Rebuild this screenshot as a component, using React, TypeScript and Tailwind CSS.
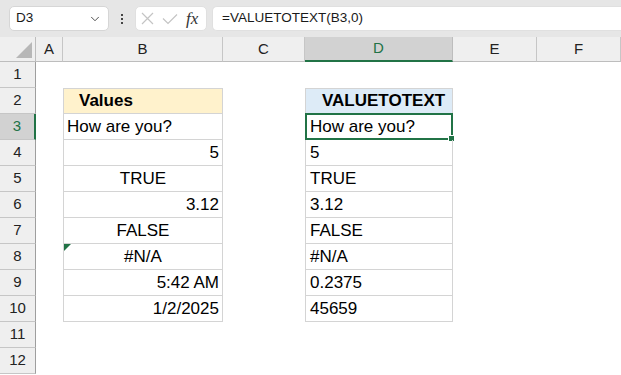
import { ChevronDown } from 'lucide-react';

/* Excel-like sheet: VALUETOTEXT example */

type Align = 'left' | 'center' | 'right';

const colWidths = 'grid-cols-[36px_27px_160px_82px_148px_84px_84px]';
const columns = ['A', 'B', 'C', 'D', 'E', 'F'];

const values: { text: string; align: Align }[] = [
  { text: 'How are you?', align: 'left' },
  { text: '5', align: 'right' },
  { text: 'TRUE', align: 'center' },
  { text: '3.12', align: 'right' },
  { text: 'FALSE', align: 'center' },
  { text: '#N/A', align: 'center' },
  { text: '5:42 AM', align: 'right' },
  { text: '1/2/2025', align: 'right' },
];

const results = ['How are you?', '5', 'TRUE', '3.12', 'FALSE', '#N/A', '0.2375', '45659'];

const alignClass: Record<Align, string> = {
  left: 'justify-start',
  center: 'justify-center',
  right: 'justify-end',
};

function Toolbar() {
  return (
    <div className="h-[37px] bg-[#e6e6e6] flex items-center pl-[9px] gap-[5px] font-['Liberation_Sans',sans-serif] text-[13.5px] text-[#1a1a1a]">
      {/* Name box */}
      <div className="w-[100px] h-[25px] bg-white rounded-[5px] border border-[#d6d6d6] flex items-center pl-[6px] pr-[6px] justify-between">
        <span>D3</span>
        <ChevronDown className="w-[14px] h-[14px] text-[#444]" strokeWidth={1.6} />
      </div>

      {/* Dots */}
      <div className="w-[16px] flex flex-col items-center gap-[2px]">
        <span className="w-[2px] h-[2px] bg-[#444]" />
        <span className="w-[2px] h-[2px] bg-[#444]" />
        <span className="w-[2px] h-[2px] bg-[#444]" />
      </div>

      {/* Cancel / enter / fx */}
      <div className="w-[72px] h-[25px] bg-white rounded-[5px] border border-[#e0e0e0] flex items-center pl-[5px] gap-[8px]">
        <svg width="13" height="13" viewBox="0 0 13 13" className="text-[#c4c4c4]">
          <path d="M1 1 L12 12 M12 1 L1 12" stroke="currentColor" strokeWidth="1.2" fill="none" />
        </svg>
        <svg width="16" height="12" viewBox="0 0 16 12" className="text-[#c4c4c4]">
          <path d="M1 5.5 L6 10.5 L15 1.5" stroke="currentColor" strokeWidth="1.2" fill="none" />
        </svg>
        <span className="font-['Liberation_Serif',serif] italic text-[17px] text-[#333] leading-none">fx</span>
      </div>

      {/* Formula input */}
      <div className="flex-1 h-[25px] bg-white rounded-l-[5px] border border-r-0 border-[#e0e0e0] flex items-center pl-[9px]">
        =VALUETOTEXT(B3,0)
      </div>
    </div>
  );
}

export default function App() {
  const rows = Array.from({ length: 12 }, (_, i) => i + 1);

  return (
    <div className="w-[621px] h-[375px] overflow-hidden bg-white">
      <Toolbar />

      <div
        className={`grid ${colWidths} grid-rows-[25px_repeat(12,26px)] font-['Liberation_Sans',sans-serif]`}
      >
        {/* ── Column headers ─────────────────────────────── */}
        <div className="bg-[#efefef] border-r border-b border-[#bdbdbd] relative">
          <svg width="16" height="16" viewBox="0 0 16 16" className="absolute right-[3px] bottom-[3px]">
            <polygon points="16,0 16,16 0,16" fill="#b7b7b7" />
          </svg>
        </div>
        {columns.map((c) =>
          c === 'D' ? (
            <div
              key={c}
              className="bg-[#d2d2d2] border-r border-[#bdbdbd] border-b-2 border-b-[#217346] flex items-center justify-center text-[15px] text-[#217346]"
            >
              {c}
            </div>
          ) : (
            <div
              key={c}
              className="bg-[#efefef] border-r border-b border-[#c6c6c6] border-b-[#bdbdbd] flex items-center justify-center text-[15px] text-[#222]"
            >
              {c}
            </div>
          )
        )}

        {/* ── Rows ───────────────────────────────────────── */}
        {rows.map((r) => {
          const valueIdx = r - 3;
          const inTable = r >= 2 && r <= 10;
          const isHeader = r === 2;
          const value = valueIdx >= 0 && valueIdx < values.length ? values[valueIdx] : null;
          const result = valueIdx >= 0 && valueIdx < results.length ? results[valueIdx] : null;
          const tableCell = `border-x border-b border-[#d4d4d4] ${isHeader ? 'border-t' : ''}`;

          return [
            /* Row number */
            r === 3 ? (
              <div
                key={`h${r}`}
                className="bg-[#d2d2d2] border-b border-[#c6c6c6] border-r-2 border-r-[#217346] flex items-center justify-center text-[15px] text-[#217346]"
              >
                {r}
              </div>
            ) : (
              <div
                key={`h${r}`}
                className="bg-[#efefef] border-b border-[#c6c6c6] border-r border-r-[#9e9e9e] flex items-center justify-center text-[15px] text-[#222]"
              >
                {r}
              </div>
            ),

            /* A */
            <div key={`a${r}`} />,

            /* B */
            inTable ? (
              isHeader ? (
                <div
                  key={`b${r}`}
                  className={`${tableCell} bg-[#fff2cc] flex items-center pl-[15px] text-[17px] font-bold text-black`}
                >
                  Values
                </div>
              ) : (
                <div
                  key={`b${r}`}
                  className={`${tableCell} relative flex items-center px-[3px] text-[17px] text-black ${alignClass[value!.align]}`}
                >
                  {r === 8 && (
                    <svg width="7" height="7" viewBox="0 0 7 7" className="absolute left-0 top-0">
                      <polygon points="0,0 7,0 0,7" fill="#217346" />
                    </svg>
                  )}
                  {value!.text}
                </div>
              )
            ) : (
              <div key={`b${r}`} />
            ),

            /* C */
            <div key={`c${r}`} />,

            /* D */
            inTable ? (
              isHeader ? (
                <div
                  key={`d${r}`}
                  className={`${tableCell} bg-[#ddebf7] flex items-center pl-[16px] text-[17px] font-bold text-black`}
                >
                  VALUETOTEXT
                </div>
              ) : (
                <div
                  key={`d${r}`}
                  className={`${tableCell} relative flex items-center px-[4px] text-[17px] text-black`}
                >
                  {r === 3 && (
                    <>
                      <div className="absolute -left-[1px] -top-[1px] -right-[1px] -bottom-[1px] border-2 border-[#217346]" />
                      <div className="absolute -right-[3px] -bottom-[3px] w-[5px] h-[5px] bg-[#217346] border border-white box-content" />
                    </>
                  )}
                  {result}
                </div>
              )
            ) : (
              <div key={`d${r}`} />
            ),

            /* E, F */
            <div key={`e${r}`} />,
            <div key={`f${r}`} />,
          ];
        })}
      </div>
    </div>
  );
}
